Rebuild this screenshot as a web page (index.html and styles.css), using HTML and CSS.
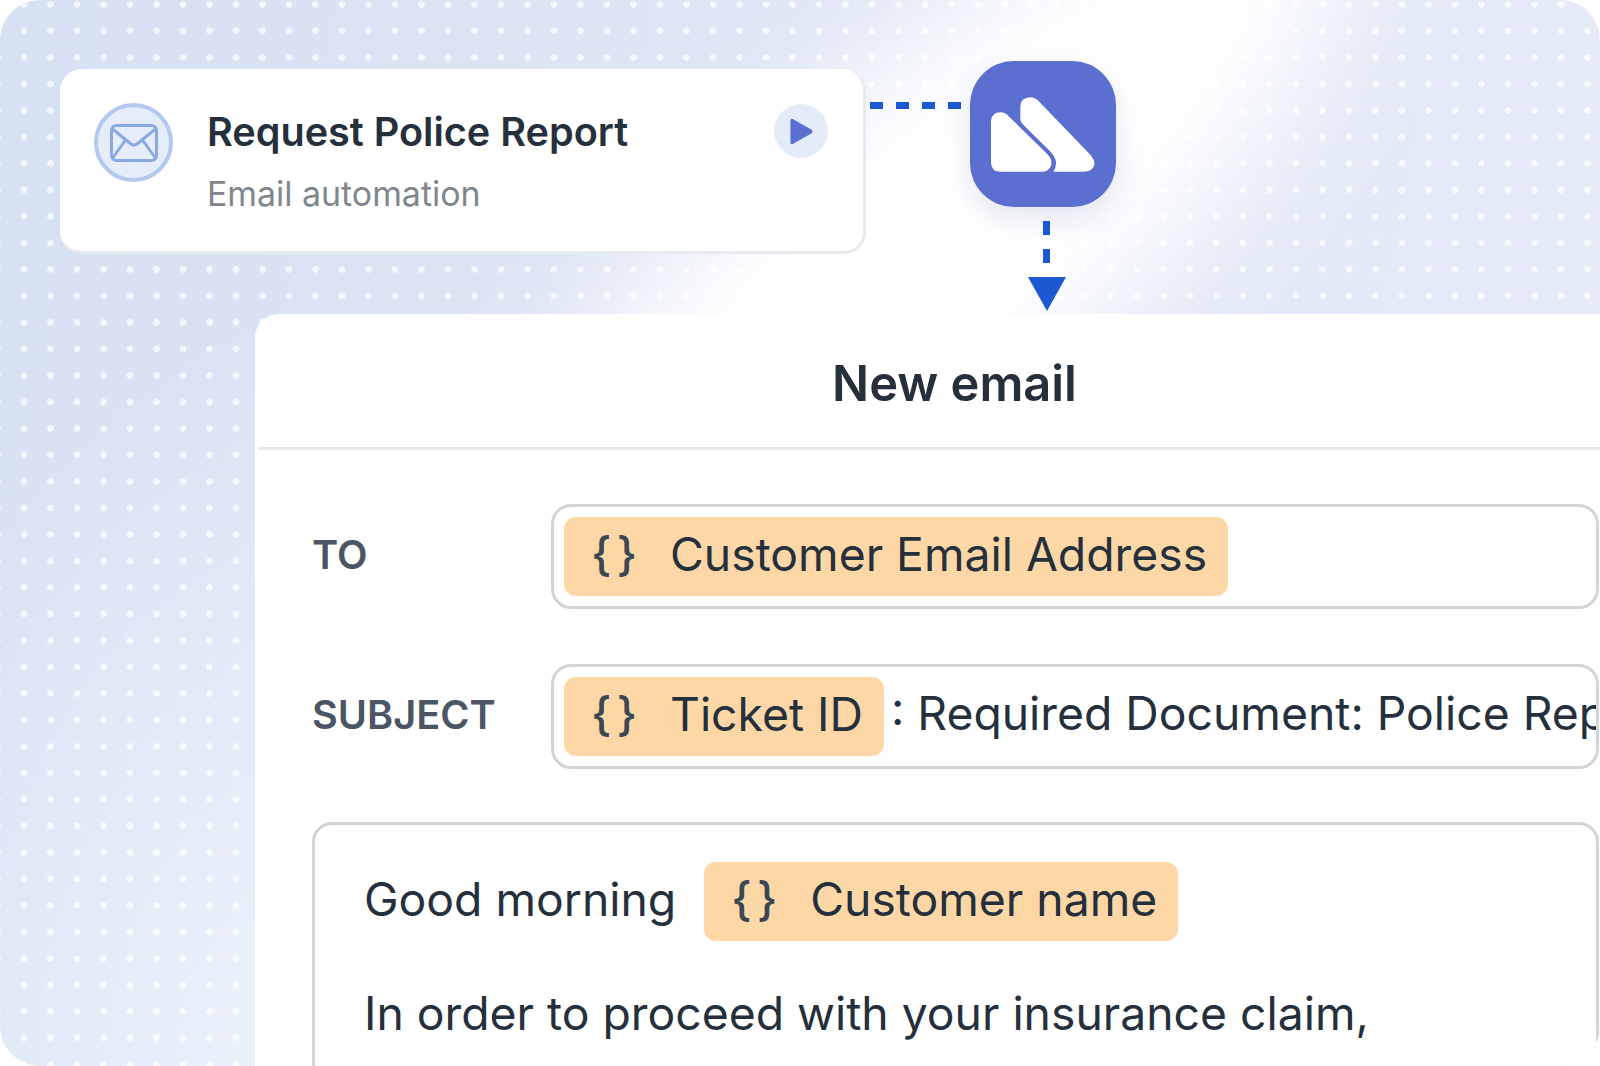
FILE: index.html
```html
<!DOCTYPE html>
<html lang="en">
<head>
    <meta charset="UTF-8">
    <title>Request Police Report</title>
    <link rel="stylesheet" href="styles.css">
</head>
<body>
    <div class="stage">
        <div class="top-row">
            <div class="auto-card">
                <div class="mail-badge">
                    <svg width="48" height="38" viewBox="0 0 48 38" fill="none" stroke="#8aa8e2" stroke-width="3" stroke-linejoin="round" stroke-linecap="round">
                        <rect x="1.5" y="1.5" width="45" height="35" rx="5"/>
                        <path d="M2.5 5 L21 20 Q24 22 27 20 L45.5 5"/>
                        <path d="M3 33.5 L15.5 16"/>
                        <path d="M45 33.5 L32.5 16"/>
                    </svg>
                </div>
                <div class="auto-text">
                    <div class="auto-title">Request Police Report</div>
                    <div class="auto-sub">Email automation</div>
                </div>
                <div class="play-btn">
                    <svg width="24" height="29" viewBox="0 0 26 30">
                        <path d="M3 1.5 L23.5 13 Q25.5 15 23.5 17 L3 28.5 Q0.5 29.5 0.5 27 L0.5 3 Q0.5 0.5 3 1.5 Z" fill="#5a6fd0"/>
                    </svg>
                </div>
            </div>
            <div class="dash-h"><i></i><i></i><i></i><i></i></div>
            <div class="logo-col">
                <div class="logo">
                    <svg width="104" height="75" viewBox="92 123 312 224" fill="#fff">
                        <path d="M92 197 Q92 168 122 168 Q135 168 145 180 L263 296 Q277 312 272 328 Q266 347 242 347 L122 347 Q92 347 92 318 Z"/>
                        <path d="M180 153 Q180 123 210 123 Q224 123 234 134 L392 298 Q404 312 402 326 Q396 347 370 347 L279 347 Q290 330 286 312 Q282 298 270 286 L188 205 Q180 197 180 190 Z"/>
                    </svg>
                </div>
                <div class="dash-v"><i></i><i></i></div>
                <svg class="arrow" width="38" height="34" viewBox="0 0 38 34"><path d="M0 0 H38 L19 34 Z" fill="#1c58d2"/></svg>
            </div>
        </div>

        <div class="panel">
            <div class="panel-head">New email</div>
            <div class="panel-body">
                <div class="field-row">
                    <div class="field-label">TO</div>
                    <div class="field">
                        <span class="chip"><span class="braces">{ }</span>Customer Email Address</span>
                    </div>
                </div>
                <div class="field-row">
                    <div class="field-label">SUBJECT</div>
                    <div class="field">
                        <span class="chip"><span class="braces">{ }</span>Ticket ID</span>
                        <span class="field-text">: Required Document: Police Report</span>
                    </div>
                </div>
                <div class="message">
                    <div class="greeting">
                        <span class="greeting-text">Good morning</span>
                        <span class="chip"><span class="braces">{ }</span>Customer name</span>
                    </div>
                    <p>In order to proceed with your insurance claim,<br>please provide the document number of the</p>
                </div>
            </div>
        </div>
    </div>
</body>
</html>
```

FILE: styles.css
```css
html, body {
    margin: 0;
    height: 100%;
    background-color: #fff;
}
body {
    font-family: Inter, 'Noto Sans', sans-serif;
    color: #25303c;
    overflow: hidden;
}
.stage {
    position: relative;
    width: 1600px;
    height: 1066px;
    box-sizing: border-box;
    padding-top: 61px;
    border-radius: 40px;
    overflow: hidden;
    background-color: #e3e9f7;
    background-image:
        radial-gradient(circle, rgba(255, 255, 255, 0.7) 3px, transparent 3.6px),
        radial-gradient(ellipse 520px 760px at 300px 1066px, #ecf3fc 0%, rgba(236, 243, 252, 0) 100%),
        linear-gradient(100deg, #d6e1f3 0%, #dde4f4 30%, #e6ecf8 100%);
    background-size: 26.5px 26.5px, auto, auto;
    background-position: 10.75px -8.85px, 0 0, 0 0;
}
/* soft white streak behind the logo */
.stage::before {
    content: "";
    position: absolute;
    left: 340px;
    top: 90px;
    width: 1140px;
    height: 350px;
    background-color: #fff;
    border-radius: 50%;
    filter: blur(60px);
    transform: rotate(-42deg);
}
.top-row, .panel {
    position: relative;
}
.top-row {
    display: flex;
    align-items: flex-start;
    height: 253px;
    padding-left: 60px;
}
.auto-card {
    width: 806px;
    height: 185px;
    box-sizing: border-box;
    margin-top: 8px;
    padding: 34px 34px 0 34px;
    display: flex;
    background-color: #fff;
    border: 3px solid #e7eaef;
    border-left: 0;
    border-top: 0;
    border-radius: 22px;
}
.mail-badge {
    width: 79px;
    height: 79px;
    box-sizing: border-box;
    flex-shrink: 0;
    display: flex;
    align-items: center;
    justify-content: center;
    background-color: #e5edfa;
    border: 4px solid #b3c9f0;
    border-radius: 50%;
}
.auto-text {
    flex: 1;
    margin-left: 34px;
}
.auto-title {
    font-size: 39.6px;
    font-weight: 600;
    line-height: 46px;
    margin-top: 6px;
}
.auto-sub {
    font-size: 33.9px;
    line-height: 40px;
    margin-top: 19px;
    color: #7f868d;
}
.play-btn {
    width: 54px;
    height: 54px;
    margin-top: 1px;
    margin-right: 1px;
    display: flex;
    align-items: center;
    justify-content: center;
    padding-left: 2px;
    box-sizing: border-box;
    background-color: #e4ecf9;
    border-radius: 50%;
}
.dash-h {
    display: flex;
    gap: 13px;
    margin: 41px 9px 0 4px;
}
.dash-h i {
    display: block;
    width: 13px;
    height: 7px;
    background-color: #1c58d2;
}
.logo-col {
    display: flex;
    flex-direction: column;
    align-items: center;
    width: 146px;
}
.logo {
    width: 146px;
    height: 146px;
    border-radius: 44px;
    display: flex;
    align-items: center;
    justify-content: center;
    background-color: #5a6fd0;
    box-shadow: 0 12px 30px rgba(60, 80, 150, 0.14);
}
.dash-v {
    display: flex;
    flex-direction: column;
    gap: 14px;
    margin: 14px 0 0 7px;
}
.dash-v i {
    display: block;
    width: 7px;
    height: 14px;
    background-color: #1c58d2;
}
.arrow {
    margin: 14px 0 0 7px;
}
.panel {
    width: 1396px;
    height: 760px;
    margin-left: 255px;
    background-color: #fff;
    border-radius: 24px 0 0 0;
}
.panel-head {
    height: 133px;
    line-height: 140px;
    text-align: center;
    font-size: 48.8px;
    font-weight: 600;
    border-bottom: 3px solid #e8eaed;
    margin-left: 3px;
}
.panel-body {
    padding: 54px 0 0 57px;
}
.field-row {
    display: flex;
    align-items: center;
    margin-bottom: 55px;
}
.field-label {
    width: 239px;
    padding-bottom: 4px;
    font-size: 39.7px;
    font-weight: 600;
    color: #4b5563;
}
.field {
    width: 1048px;
    height: 105px;
    box-sizing: border-box;
    padding: 0 10px;
    display: flex;
    align-items: center;
    overflow: hidden;
    white-space: nowrap;
    border: 3px solid #d2d5d8;
    border-radius: 20px;
}
.chip {
    display: inline-flex;
    align-items: center;
    height: 79px;
    box-sizing: border-box;
    padding: 0 21px 6px 27px;
    font-size: 46.3px;
    background-color: #fdd7a6;
    border-radius: 12px;
    flex-shrink: 0;
}
.braces {
    width: 79px;
    flex-shrink: 0;
    font-weight: 500;
    word-spacing: -7px;
    color: #3b4754;
}
.field-text {
    margin-left: 7px;
    padding-bottom: 8px;
    font-size: 46.3px;
}
.message {
    width: 1287px;
    height: 320px;
    box-sizing: border-box;
    margin-top: -2px;
    padding: 37px 0 0 49px;
    border: 3px solid #d2d5d8;
    border-radius: 20px;
    font-size: 46.3px;
}
.greeting {
    display: flex;
    align-items: center;
    gap: 28px;
}
.greeting-text {
    padding-bottom: 6px;
}
.message p {
    margin: 36px 0 0;
    line-height: 72px;
}
```
